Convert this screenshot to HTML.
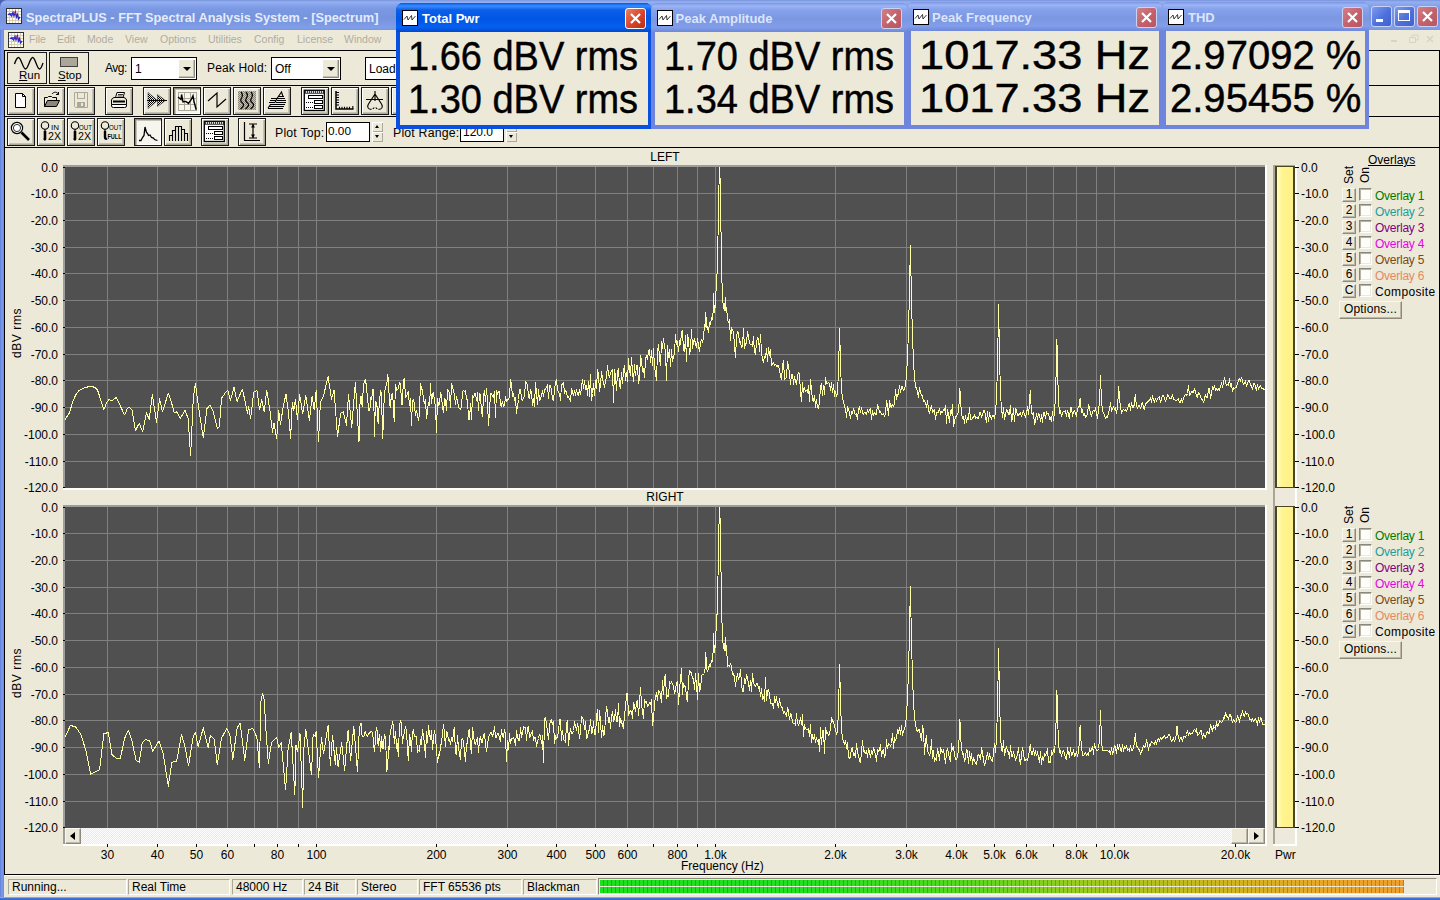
<!DOCTYPE html>
<html><head><meta charset="utf-8"><title>SpectraPLUS - FFT Spectral Analysis System - [Spectrum]</title>
<style>
*{margin:0;padding:0;box-sizing:border-box}
html,body{width:1440px;height:900px;overflow:hidden}
body{position:relative;background:#ece9d8;font-family:"Liberation Sans",sans-serif;font-size:12px;color:#000}
.a{position:absolute}
.t{position:absolute;white-space:nowrap;line-height:1}
.hl{position:absolute;background:#000;height:1px}
.tb{position:absolute;width:28px;height:28px;border:1px solid #1a1a1a;background:#ece9d8;box-shadow:inset 1px 1px 0 #fff,inset -1px -1px 0 #aca899,inset -2px -2px 0 #c5c2b2}
.tb.dn{background:#f6f5ee;box-shadow:inset 1px 1px 0 #8d8a7c,inset 2px 2px 0 #c5c2b2,inset -1px -1px 0 #fff}
.tb svg{position:absolute;left:0;top:0}
.cb{position:absolute;height:23px;border:1px solid #000;background:#fff}
.cb .v{position:absolute;left:3px;top:5px;font-size:12px;line-height:1}
.cb .d{position:absolute;right:1px;top:1px;width:17px;height:19px;background:#ece9d8;box-shadow:inset 1px 1px 0 #fff,inset -1px -1px 0 #8d8a7c,inset -2px -2px 0 #c5c2b2}
.cb .d:after{content:"";position:absolute;left:5px;top:8px;border:4px solid transparent;border-top:4px solid #000;border-bottom:0}
.win{position:absolute;border-radius:7px 7px 0 0;overflow:hidden}
.win .tt{position:absolute;left:0;top:0;right:0;height:29px}
.win .bd{position:absolute;background:#ece9d8}
.win .ti{position:absolute;color:#fff;font-weight:bold;font-size:13px;line-height:1;white-space:nowrap;top:9px}
.win .ic{position:absolute;width:16px;height:16px;background:#fff;border:1px solid #000}
.big{position:absolute;font-size:41px;line-height:1;white-space:nowrap;color:#000;transform-origin:0 0;-webkit-text-stroke:0.45px #000}
.x{position:absolute;width:21px;height:21px;border:1px solid #fff;border-radius:3px}
.yl{position:absolute;font-size:12px;line-height:1;white-space:nowrap;text-align:right;width:50px}
.yr{position:absolute;font-size:12px;line-height:1;white-space:nowrap}
.xl{position:absolute;font-size:12px;line-height:1;white-space:nowrap;transform:translateX(-50%)}
.ov{position:absolute;font-size:12px;line-height:1;white-space:nowrap;letter-spacing:-0.25px}
.sb{position:absolute;width:15px;height:13px;border:1px solid;border-color:#f8f7f0 #8d8a7c #8d8a7c #f8f7f0;background:#ece9d8;font-size:12px;line-height:11px;text-align:center;box-shadow:inset -1px -1px 0 #bab7a8}
.ck{position:absolute;width:13px;height:13px;background:#fdfdfa;border:1px solid;border-color:#8a887c #fff #fff #8a887c;box-shadow:inset 1px 1px 0 #b5b2a4,inset -1px -1px 0 #ece9d8}
.sp{position:absolute;top:879px;height:16px;border:1px solid;border-color:#aca899 #fff #fff #aca899;font-size:12px;line-height:14px;padding-left:3px;white-space:nowrap}
.men{position:absolute;top:33px;font-size:10.5px;line-height:13px;color:#b0ad9f;white-space:nowrap}
</style></head><body>

<div class="a" style="left:0;top:0;width:8px;height:8px;background:#4a62b0"></div>
<div class="a" style="left:0;top:0;width:1440px;height:30px;border-radius:7px 0 0 0;background:linear-gradient(#7a93da 0,#94b0f4 2px,#86a3ec 5px,#7b98e2 9px,#7693de 18px,#7c99e4 24px,#809eea 28px,#7893de 30px)"></div>
<div class="a" style="left:0;top:30px;width:4px;height:870px;background:linear-gradient(90deg,#5f7fd8,#7f9cec 2px,#6d87de 4px)"></div>
<div class="a" style="left:0;top:897px;width:1440px;height:3px;background:linear-gradient(#c8d4f0,#4a78d6 1px,#3f6fd0 2px,#3a66c8)"></div>
<svg class="a" style="left:6px;top:8px" width="16" height="16" viewBox="0 0 16 16"><rect x="0" y="0" width="16" height="16" fill="#303030"/><rect x="1" y="1" width="14" height="14" fill="#fff"/><path d="M1 3.5H15M1 6.5H15M1 9.5H15M1 12.5H15M3.5 1V15M6.5 1V15M9.5 1V15M12.5 1V15" stroke="#dccfa8" stroke-width="1"/><path d="M2 6.5L4 6L5.5 8L7 4.5L8 8L9.5 4L10.5 9L11.5 6.5L12.5 11L14 9" fill="none" stroke="#2828c8" stroke-width="1.3"/><path d="M3 5.5H6M8 3.5L10 6.5" stroke="#c03060" stroke-width="1"/></svg>
<div class="t" style="left:26px;top:10.5px;font-size:13px;font-weight:bold;color:#e4ecfb;transform:scaleX(0.981);transform-origin:0 0" id="title">SpectraPLUS - FFT Spectral Analysis System - [Spectrum]</div>
<div class="x" style="left:1371px;top:6px;background:linear-gradient(135deg,#7d9bf0,#4e70dc 55%,#4062cf);border-color:#c9d4f5"><div style="position:absolute;left:4px;top:12px;width:7px;height:3px;background:#fff"></div></div>
<div class="x" style="left:1394px;top:6px;background:linear-gradient(135deg,#7d9bf0,#4e70dc 55%,#4062cf);border-color:#c9d4f5"><div style="position:absolute;left:3px;top:3px;width:12px;height:11px;border:1px solid #fff;border-top:3px solid #fff"></div></div>
<div class="x" style="left:1417px;top:6px;background:linear-gradient(135deg,#d27f88,#c4606a 55%,#b85560);border-color:#c9d4f5"><svg width="19" height="19" viewBox="0 0 19 19" style="position:absolute;left:0;top:0"><path d="M5 5L14 14M14 5L5 14" stroke="#fff" stroke-width="2.2" stroke-linecap="butt"/></svg></div>
<svg class="a" style="left:8px;top:32px" width="16" height="16" viewBox="0 0 16 16"><rect x="0" y="0" width="16" height="16" fill="#303030"/><rect x="1" y="1" width="14" height="14" fill="#fff"/><path d="M1 3.5H15M1 6.5H15M1 9.5H15M1 12.5H15M3.5 1V15M6.5 1V15M9.5 1V15M12.5 1V15" stroke="#dccfa8" stroke-width="1"/><path d="M2 6.5L4 6L5.5 8L7 4.5L8 8L9.5 4L10.5 9L11.5 6.5L12.5 11L14 9" fill="none" stroke="#2828c8" stroke-width="1.3"/><path d="M3 5.5H6M8 3.5L10 6.5" stroke="#c03060" stroke-width="1"/></svg>
<div class="men" style="left:29px">File</div>
<div class="men" style="left:57px">Edit</div>
<div class="men" style="left:87px">Mode</div>
<div class="men" style="left:125px">View</div>
<div class="men" style="left:160px">Options</div>
<div class="men" style="left:208px">Utilities</div>
<div class="men" style="left:254px">Config</div>
<div class="men" style="left:297px">License</div>
<div class="men" style="left:344px">Window</div>
<svg class="a" style="left:1385px;top:32px" width="52" height="14" viewBox="0 0 52 14"><path d="M6 9H12" stroke="#d8d4c4" stroke-width="2"/><path d="M24.5 5.5H30.5V10.5H24.5Z M27 5V3H33V8H31" fill="none" stroke="#d8d4c4" stroke-width="1"/><path d="M42 4L48 10M48 4L42 10" stroke="#d8d4c4" stroke-width="1.6"/></svg>
<div class="hl" style="left:4px;top:50px;width:1436px;height:1px"></div>
<div class="a" style="left:4px;top:50px;width:1px;height:825px;background:#000"></div>
<div class="hl" style="left:4px;top:85px;width:1436px"></div>
<div class="hl" style="left:4px;top:116px;width:1436px"></div>
<div class="hl" style="left:4px;top:147px;width:1436px"></div>
<div class="hl" style="left:4px;top:874px;width:1436px;height:1px"></div>
<div class="a" style="left:5px;top:875px;width:1435px;height:1px;background:#fff"></div>
<div class="a" style="left:1439px;top:50px;width:1px;height:824px;background:#000"></div>
<div class="a" style="left:7px;top:52px;width:40px;height:32px;border:1px solid #1a1a1a;background:#ece9d8"><svg class="a" style="left:0;top:0" width="38" height="29" viewBox="0 0 38 29"><path d="M6.5 11 C8 6.5,9 4.5,10.5 4.5 C13 4.5,15 16,17.5 16 C20 16,22 4.5,24.7 4.5 C27.2 4.5,29 16,31.5 16 C33 16,34 13,35 10" fill="none" stroke="#000" stroke-width="1.3"/></svg><div class="t" style="left:11px;top:17px;font-size:11.5px"><u>R</u>un</div></div>
<div class="a" style="left:49px;top:52px;width:40px;height:32px;border:1px solid #1a1a1a;background:#ece9d8"><div class="a" style="left:10px;top:4px;width:18px;height:10px;background:#aaa69a;border:1px solid #404040"></div><div class="t" style="left:8px;top:17px;font-size:11.5px"><u>S</u>top</div></div>
<div class="t" style="left:105px;top:62px;font-size:12px;letter-spacing:-0.5px">Avg:</div>
<div class="cb" style="left:131px;top:57px;width:66px"><div class="v">1</div><div class="d"></div></div>
<div class="t" style="left:207px;top:62px;font-size:12px;letter-spacing:0.15px">Peak Hold:</div>
<div class="cb" style="left:271px;top:57px;width:70px"><div class="v">Off</div><div class="d"></div></div>
<div class="cb" style="left:365px;top:57px;width:70px"><div class="v">Load</div></div>
<svg width="0" height="0" style="position:absolute"><defs><pattern id="dp" width="2" height="2" patternUnits="userSpaceOnUse"><rect width="1" height="1" fill="#000"/><rect x="1" y="1" width="1" height="1" fill="#000"/></pattern><pattern id="dg" width="2" height="2" patternUnits="userSpaceOnUse"><rect width="2" height="2" fill="#c8c5b4"/><rect width="1" height="1" fill="#8a877a"/><rect x="1" y="1" width="1" height="1" fill="#8a877a"/></pattern><pattern id="sc" width="2" height="2" patternUnits="userSpaceOnUse"><rect width="2" height="2" fill="#fff"/><rect width="1" height="1" fill="#ece9d8"/><rect x="1" y="1" width="1" height="1" fill="#ece9d8"/></pattern></defs></svg>
<div class="tb" style="left:7px;top:87px"><svg width="26" height="26" viewBox="1 1 26 26"><path d="M8.5 6.5H15.5L18.5 9.5V20.5H8.5Z" fill="#fff" stroke="#000"/><path d="M15.5 6.5V9.5H18.5" fill="none" stroke="#000"/></svg></div>
<div class="tb" style="left:37px;top:87px"><svg width="26" height="26" viewBox="1 1 26 26"><path d="M7.5 19.5V10.5H10.5L11.5 9.5H14.5L15.5 10.5H19.5V13.5" fill="none" stroke="#000"/><path d="M7.5 19.5L10.5 13.5H22.5L19.5 19.5Z" fill="#8a8778" stroke="#000"/><path d="M15 7C17 4.5,20 4.5,21.5 7.5M21.5 7.5V5M21.5 7.5H19" fill="none" stroke="#000"/></svg></div>
<div class="tb" style="left:67px;top:87px"><svg width="26" height="26" viewBox="1 1 26 26"><path d="M7.5 5.5H20.5V20.5H8.5L7.5 19.5Z" fill="none" stroke="#aca899"/><rect x="10.5" y="5.5" width="7" height="6" fill="none" stroke="#aca899"/><rect x="10" y="15" width="8" height="5" fill="#aca899"/><rect x="14" y="16" width="2" height="3" fill="#ece9d8"/></svg></div>
<div class="tb" style="left:105px;top:87px"><svg width="26" height="26" viewBox="1 1 26 26"><path d="M10.5 10.5L12 5.5H19.5L18 10.5Z" fill="#fff" stroke="#000"/><path d="M13 7.5H18M12.5 9H17.5" stroke="#000" stroke-width="0.8"/><path d="M6.5 13Q6.5 11.5 9 10.5H19Q21.5 11.5 21.5 13V17.5H6.5Z" fill="#ece9d8" stroke="#000"/><path d="M6.5 17.5H21.5V19Q21.5 20.5 19.5 20.5H8.5Q6.5 20.5 6.5 19Z" fill="#fff" stroke="#000"/><path d="M8 14.5H20" stroke="#000" stroke-width="2"/></svg></div>
<div class="tb" style="left:143px;top:87px"><svg width="26" height="26" viewBox="1 1 26 26"><path d="M5 5.5L14.5 13.5L5 21.5Z M14.5 7.5L22.5 13.5L14.5 19.5Z" fill="url(#dp)" stroke="#000" stroke-width="0.4"/><path d="M4 13.5H24" stroke="#000" shape-rendering="crispEdges"/></svg></div>
<div class="tb dn" style="left:173px;top:87px"><svg width="26" height="26" viewBox="1 1 26 26"><path d="M5.5 5.5H23.5V23.5H5.5ZM5.5 11.5H23.5M5.5 17.5H23.5M11.5 5.5V23.5M17.5 5.5V23.5" fill="none" stroke="#aca899" shape-rendering="crispEdges"/><path d="M5 10L8 12.5L8.6 7.5L10 15L12.8 14.4L15.5 16.4L18.3 12.3L20 8.8L21.1 15L23.2 22.7" fill="none" stroke="#000" stroke-width="1.4"/></svg></div>
<div class="tb" style="left:203px;top:87px"><svg width="26" height="26" viewBox="1 1 26 26"><path d="M5 14L14 6V20L23 12" fill="none" stroke="#000" stroke-width="1.2"/></svg></div>
<div class="tb" style="left:233px;top:87px"><svg width="26" height="26" viewBox="1 1 26 26"><rect x="5" y="4" width="18" height="19" fill="url(#dg)"/><path d="M8 5Q10.5 8 8.5 11T9.5 16T7.5 22M13 5Q15.5 8 13.5 11T14.5 16T12.5 22M18 5Q20.5 8 18.5 11T19.5 16T17.5 22" fill="none" stroke="#000" stroke-width="1.25"/></svg></div>
<div class="tb" style="left:263px;top:87px"><svg width="26" height="26" viewBox="1 1 26 26"><path d="M8 11.5H14M7 13.5H13M6 15.5H12M7 17.5H22M6 19.5H21M5 21.5H20M15 9.5H21M14 11.5H22M14 13.5H23M13 15.5H23" stroke="#000" stroke-width="1" shape-rendering="crispEdges"/><path d="M14 11.5L18.5 5L20 9.5M12 15.5L14 11.5M5 21L7.5 17.5" fill="none" stroke="#000" stroke-width="1.1"/></svg></div>
<div class="tb" style="left:301px;top:87px"><svg width="26" height="26" viewBox="1 1 26 26"><rect x="3.3" y="3.3" width="20" height="20.2" fill="#fff" stroke="#000" stroke-width="1.3"/><path d="M4 4.9H23" stroke="#000" stroke-width="1.5" stroke-dasharray="1.2 0.8"/><path d="M4 6.4H23" stroke="#000" stroke-width="0.7"/><g shape-rendering="crispEdges" fill="#fff" stroke="#000"><rect x="7.5" y="8.5" width="14" height="3"/><rect x="13.5" y="13.5" width="8" height="3"/><rect x="13.5" y="18.5" width="8" height="3"/><path d="M5 15.5H12M5 20.5H12" stroke-dasharray="1 1"/></g></svg></div>
<div class="tb" style="left:331px;top:87px"><svg width="26" height="26" viewBox="1 1 26 26"><path d="M5 4V22H22.5" fill="none" stroke="#000" stroke-width="1.5"/><path d="M5 5.5H8M5 8H8M5 10.5H8M5 13H8M5 15.5H8M5 18H8M8.5 22V19.8M11 22V19.8M13.5 22V19.8M16 22V19.8M18.5 22V19.8M21.8 22V19" stroke="#000" stroke-width="1.1"/></svg></div>
<div class="tb" style="left:361px;top:87px"><svg width="26" height="26" viewBox="1 1 26 26"><path d="M14 4V14M5 12.5H22M14 7L7.5 17Q5.5 20.5 8.5 22M14 7L20.5 17Q22.5 20.5 19.5 22" fill="none" stroke="#000" stroke-width="1.15"/><path d="M8.5 22.3Q12 22.5 13.2 20.5M19.5 22.3Q16 22.5 14.8 20.5" fill="none" stroke="#000" stroke-width="1.1" stroke-dasharray="2 1.2"/></svg></div>
<div class="tb" style="left:391px;top:87px"><svg width="26" height="26" viewBox="1 1 26 26"><path d="M8.5 6.5H15.5L18.5 9.5V20.5H8.5Z" fill="#fff" stroke="#000"/><path d="M15.5 6.5V9.5H18.5" fill="none" stroke="#000"/></svg></div>
<div class="tb" style="left:7px;top:118px"><svg width="26" height="26" viewBox="1 1 26 26"><circle cx="10" cy="10" r="5.6" fill="#fff" stroke="#000" stroke-width="1.2"/><circle cx="10" cy="10" r="3.6" fill="none" stroke="#000" stroke-width="0.8"/><path d="M14.5 14.5L22 22" stroke="#000" stroke-width="2.6"/></svg></div>
<div class="tb" style="left:37px;top:118px"><svg width="26" height="26" viewBox="1 1 26 26"><circle cx="8" cy="7.5" r="3.7" fill="none" stroke="#000" stroke-width="1.1"/><path d="M8 11V13" stroke="#000" stroke-width="1.2"/><path d="M8 13V21L7 22" fill="none" stroke="#000" stroke-width="2.6"/><text x="14" y="11.5" font-size="8" font-family='"Liberation Sans", sans-serif' textLength="8" lengthAdjust="spacingAndGlyphs">IN</text><text x="11" y="22" font-size="11.5" font-family='"Liberation Sans", sans-serif' textLength="13" lengthAdjust="spacingAndGlyphs">2X</text></svg></div>
<div class="tb" style="left:67px;top:118px"><svg width="26" height="26" viewBox="1 1 26 26"><circle cx="8" cy="7.5" r="3.7" fill="none" stroke="#000" stroke-width="1.1"/><path d="M8 11V13" stroke="#000" stroke-width="1.2"/><path d="M8 13V21L7 22" fill="none" stroke="#000" stroke-width="2.6"/><text x="12" y="11.5" font-size="8" font-family='"Liberation Sans", sans-serif' textLength="13" lengthAdjust="spacingAndGlyphs">OUT</text><text x="11" y="22" font-size="11.5" font-family='"Liberation Sans", sans-serif' textLength="13" lengthAdjust="spacingAndGlyphs">2X</text></svg></div>
<div class="tb" style="left:97px;top:118px"><svg width="26" height="26" viewBox="1 1 26 26"><circle cx="8" cy="7.5" r="3.7" fill="none" stroke="#000" stroke-width="1.1"/><path d="M8 11V13" stroke="#000" stroke-width="1.2"/><path d="M8 13V19Q8 21.5 10 20.5" fill="none" stroke="#000" stroke-width="2.4"/><text x="12" y="11.5" font-size="8" font-family='"Liberation Sans", sans-serif' textLength="13" lengthAdjust="spacingAndGlyphs">OUT</text><text x="10.5" y="20.5" font-size="7.5" font-weight="bold" font-family='"Liberation Sans", sans-serif' textLength="14" lengthAdjust="spacingAndGlyphs">FULL</text></svg></div>
<div class="tb dn" style="left:134px;top:118px"><svg width="26" height="26" viewBox="1 1 26 26"><path d="M5 22.5H7L8.5 19.5L10 17.5L11 9L12.5 14.5L13.5 15.5L14.5 17.5L16 17L17.5 19.5L19.5 20L20.5 21.5L23.5 22.5" fill="none" stroke="#000" stroke-width="1.3"/></svg></div>
<div class="tb" style="left:164px;top:118px"><svg width="26" height="26" viewBox="1 1 26 26"><path d="M5.5 23V17.5H8.5V23M8.5 17V12.5H11.5V23M11.5 12V8.5H14.5V23M14.5 8.5H17.5V23M17.5 11.5H20.5V23M20.5 15.5H23.5V23" fill="none" stroke="#000" stroke-width="1.1"/></svg></div>
<div class="tb" style="left:201px;top:118px"><svg width="26" height="26" viewBox="1 1 26 26"><rect x="3.3" y="3.3" width="20" height="20.2" fill="#fff" stroke="#000" stroke-width="1.3"/><path d="M4 4.9H23" stroke="#000" stroke-width="1.5" stroke-dasharray="1.2 0.8"/><path d="M4 6.4H23" stroke="#000" stroke-width="0.7"/><g shape-rendering="crispEdges" fill="#fff" stroke="#000"><rect x="7.5" y="8.5" width="14" height="3"/><rect x="13.5" y="13.5" width="8" height="3"/><rect x="13.5" y="18.5" width="8" height="3"/><path d="M5 15.5H12M5 20.5H12" stroke-dasharray="1 1"/></g></svg></div>
<div class="tb" style="left:238px;top:118px"><svg width="26" height="26" viewBox="1 1 26 26"><path d="M6.5 4V22.5H22" fill="none" stroke="#000" stroke-width="1.2"/><path d="M11 6H19M11 20H19M15 6V20" stroke="#000" stroke-width="1.2"/><path d="M15 6L13 9.5H17ZM15 20L13 16.5H17Z" fill="#000"/></svg></div>
<div class="t" style="left:275px;top:127px;font-size:12.3px;letter-spacing:0.2px">Plot Top:</div>
<div class="cb" style="left:326px;top:122px;width:44px;height:20px"><div class="v" style="left:1px;top:3px;font-size:11.8px">0.00</div></div>
<div class="a" style="left:372px;top:122px;width:11px;height:10px;background:#ece9d8;box-shadow:inset 1px 1px 0 #fff,inset -1px -1px 0 #aca899"><div class="a" style="left:3px;top:3px;border:2.5px solid transparent;border-bottom:3px solid #000;border-top:0"></div></div>
<div class="a" style="left:372px;top:132px;width:11px;height:10px;background:#ece9d8;box-shadow:inset 1px 1px 0 #fff,inset -1px -1px 0 #aca899"><div class="a" style="left:3px;top:3px;border:2.5px solid transparent;border-top:3px solid #000;border-bottom:0"></div></div>
<div class="t" style="left:393px;top:127px;font-size:12.3px;letter-spacing:0.2px">Plot Range:</div>
<div class="cb" style="left:460px;top:122px;width:44px;height:20px"><div class="v" style="left:2px;top:3px;font-size:12px">120.0</div></div>
<div class="a" style="left:506px;top:122px;width:11px;height:10px;background:#ece9d8;box-shadow:inset 1px 1px 0 #fff,inset -1px -1px 0 #aca899"></div>
<div class="a" style="left:506px;top:132px;width:11px;height:10px;background:#ece9d8;box-shadow:inset 1px 1px 0 #fff,inset -1px -1px 0 #aca899"><div class="a" style="left:3px;top:3px;border:2.5px solid transparent;border-top:3px solid #000;border-bottom:0"></div></div>
<div class="win" style="left:396px;top:3px;width:256px;height:126px;background:#0a50e0"><div class="tt" style="background:linear-gradient(#0058ee 0,#3a8cff 3px,#0c5fe8 7px,#0055e5 16px,#0560f0 24px,#0048d0 29px)"></div><div class="ic" style="left:6px;top:7px"><svg width="14" height="14" viewBox="0 0 14 14" style="position:absolute;left:0;top:0"><path d="M1 8.5L4 5L5 9L8.5 4.5L9 9L12.5 5" fill="none" stroke="#222" stroke-width="0.9"/></svg></div><div class="ti" style="left:26.0px;color:#fff">Total Pwr</div><div class="x" style="left:229px;top:5px;background:linear-gradient(135deg,#e9805f,#d9432a 55%,#b92e12);border-color:#fff"><svg width="19" height="19" viewBox="0 0 19 19" style="position:absolute;left:0;top:0"><path d="M5 5L14 14M14 5L5 14" stroke="#fff" stroke-width="2.2" stroke-linecap="butt"/></svg></div><div class="bd" style="left:4px;top:29px;width:248px;height:93px"><div class="big" style="left:8.0px;top:3.8px;transform:scaleX(0.926)">1.66 dBV rms</div><div class="big" style="left:8.0px;top:46.7px;transform:scaleX(0.926)">1.30 dBV rms</div></div></div>
<div class="win" style="left:651px;top:3px;width:257px;height:126px;background:#6f84dc"><div class="tt" style="background:linear-gradient(#7a96e4 0,#9db5f5 3px,#86a2ec 7px,#7b97e2 16px,#829eea 24px,#6f88da 29px)"></div><div class="ic" style="left:6px;top:7px"><svg width="14" height="14" viewBox="0 0 14 14" style="position:absolute;left:0;top:0"><path d="M1 8.5L4 5L5 9L8.5 4.5L9 9L12.5 5" fill="none" stroke="#222" stroke-width="0.9"/></svg></div><div class="ti" style="left:24.5px;color:#dbe5fb">Peak Amplitude</div><div class="x" style="left:230px;top:5px;background:linear-gradient(135deg,#d27f88,#c4606a 55%,#b85560);border-color:#c9d4f5"><svg width="19" height="19" viewBox="0 0 19 19" style="position:absolute;left:0;top:0"><path d="M5 5L14 14M14 5L5 14" stroke="#fff" stroke-width="2.2" stroke-linecap="butt"/></svg></div><div class="bd" style="left:4px;top:29px;width:249px;height:93px"><div class="big" style="left:8.5px;top:3.8px;transform:scaleX(0.926)">1.70 dBV rms</div><div class="big" style="left:8.5px;top:46.7px;transform:scaleX(0.926)">1.34 dBV rms</div></div></div>
<div class="win" style="left:907px;top:2px;width:256px;height:127px;background:#6f84dc"><div class="tt" style="background:linear-gradient(#7a96e4 0,#9db5f5 3px,#86a2ec 7px,#7b97e2 16px,#829eea 24px,#6f88da 29px)"></div><div class="ic" style="left:6px;top:7px"><svg width="14" height="14" viewBox="0 0 14 14" style="position:absolute;left:0;top:0"><path d="M1 8.5L4 5L5 9L8.5 4.5L9 9L12.5 5" fill="none" stroke="#222" stroke-width="0.9"/></svg></div><div class="ti" style="left:25.0px;color:#dbe5fb">Peak Frequency</div><div class="x" style="left:229px;top:5px;background:linear-gradient(135deg,#d27f88,#c4606a 55%,#b85560);border-color:#c9d4f5"><svg width="19" height="19" viewBox="0 0 19 19" style="position:absolute;left:0;top:0"><path d="M5 5L14 14M14 5L5 14" stroke="#fff" stroke-width="2.2" stroke-linecap="butt"/></svg></div><div class="bd" style="left:4px;top:29px;width:248px;height:94px"><div class="big" style="left:8.0px;top:3.8px;transform:scaleX(1.102)">1017.33 Hz</div><div class="big" style="left:8.0px;top:46.7px;transform:scaleX(1.102)">1017.33 Hz</div></div></div>
<div class="win" style="left:1162px;top:2px;width:207px;height:127px;background:#6f84dc"><div class="tt" style="background:linear-gradient(#7a96e4 0,#9db5f5 3px,#86a2ec 7px,#7b97e2 16px,#829eea 24px,#6f88da 29px)"></div><div class="ic" style="left:6px;top:7px"><svg width="14" height="14" viewBox="0 0 14 14" style="position:absolute;left:0;top:0"><path d="M1 8.5L4 5L5 9L8.5 4.5L9 9L12.5 5" fill="none" stroke="#222" stroke-width="0.9"/></svg></div><div class="ti" style="left:26.0px;color:#dbe5fb">THD</div><div class="x" style="left:180px;top:5px;background:linear-gradient(135deg,#d27f88,#c4606a 55%,#b85560);border-color:#c9d4f5"><svg width="19" height="19" viewBox="0 0 19 19" style="position:absolute;left:0;top:0"><path d="M5 5L14 14M14 5L5 14" stroke="#fff" stroke-width="2.2" stroke-linecap="butt"/></svg></div><div class="bd" style="left:4px;top:29px;width:199px;height:94px"><div class="big" style="left:4.0px;top:3.8px;transform:scaleX(0.976)">2.97092 %</div><div class="big" style="left:4.0px;top:46.7px;transform:scaleX(0.976)">2.95455 %</div></div></div>
<div class="t" style="left:1368px;top:154px;font-size:12px;text-decoration:underline">Overlays</div>
<div class="t" style="left:665px;top:151px;font-size:12px;transform:translateX(-50%)">LEFT</div><div class="a" style="left:63px;top:165px;width:1204px;height:325px;background:#fff"></div><div class="a" style="left:63px;top:165px;width:1202px;height:323px;background:#9d9d9d"></div><svg class="a" style="left:65px;top:167px" width="1200" height="321" viewBox="65 167 1200 321"><rect x="65" y="167" width="1200" height="321" fill="#505050"/><path d="M65 193.5H1265M65 220.5H1265M65 247.5H1265M65 273.5H1265M65 300.5H1265M65 327.5H1265M65 354.5H1265M65 380.5H1265M65 407.5H1265M65 434.5H1265M65 461.5H1265M107.5 167V488M157.5 167V488M196.5 167V488M227.5 167V488M254.5 167V488M277.5 167V488M298.5 167V488M316.5 167V488M436.5 167V488M507.5 167V488M556.5 167V488M595.5 167V488M627.5 167V488M653.5 167V488M677.5 167V488M697.5 167V488M715.5 167V488M835.5 167V488M906.5 167V488M956.5 167V488M994.5 167V488M1026.5 167V488M1053.5 167V488M1076.5 167V488M1096.5 167V488M1114.5 167V488M1235.5 167V488" stroke="#808080" stroke-width="1" fill="none" shape-rendering="crispEdges"/><polyline points="64.6,420.2 69.4,412.9 72.5,402.5 75.6,395.2 79.2,390.4 82.9,388.3 87.1,387.1 91.2,386.2 95.0,387.5 97.5,390.0 100.6,399.4 103.8,409.8 106.2,403.5 109.0,399.4 112.1,401.0 116.2,397.3 120.4,406.2 124.6,415.0 127.1,409.2 128.8,407.1 131.9,409.8 135.4,430.6 139.2,423.3 142.7,431.7 146.5,412.9 149.2,419.2 152.3,394.6 156.5,422.3 159.6,398.8 162.5,411.9 168.3,393.1 171.5,402.5 174.2,412.9 176.7,411.9 180.4,418.1 185.0,410.4 188.1,418.1 190.6,455.6 193.3,398.3 195.4,383.8 198.5,406.7 203.3,437.9 206.9,408.8 210.0,405.0 213.1,410.8 217.3,428.5 219.4,426.5 221.5,398.3 224.6,393.8 227.7,390.0 230.4,400.4 234.0,387.5 237.1,401.5 242.3,389.0 245.4,402.5 247.5,414.0 248.5,406.7 250.6,418.1 253.8,392.1 256.9,390.4 259.6,409.8 261.7,399.4 264.2,411.9 266.7,390.0 270.0,410.8 272.5,432.7 274.0,423.3 276.7,438.3 278.8,410.8 280.4,424.4 283.3,406.7 286.0,393.8 288.5,412.9 290.6,438.3 292.3,402.5 293.8,410.8 295.4,399.4 297.5,419.2 299.6,394.2 302.7,414.0 305.8,395.8 309.4,420.2 312.1,396.2 314.2,409.8 316.2,390.0 318.5,441.7 320.4,402.5 323.5,395.8 328.1,376.5 331.5,399.4 334.0,390.0 337.5,436.2 340.8,412.9 343.3,411.9 346.5,425.4 348.5,394.2 351.7,427.5 355.4,382.7 359.0,442.1 360.2,397.5 361.2,395.9 362.2,406.8 363.2,390.2 364.2,381.7 365.1,379.7 366.1,383.8 367.5,397.8 368.9,411.0 369.9,410.0 370.8,397.7 371.7,399.6 372.7,389.3 373.6,390.2 374.5,436.3 375.4,401.7 376.3,403.1 377.2,407.4 378.1,423.7 379.5,399.1 380.8,390.5 381.7,399.1 382.5,438.6 383.4,423.1 384.3,393.4 385.5,387.1 386.8,384.2 387.7,374.4 388.5,381.8 389.4,400.9 390.2,407.2 391.5,394.9 392.7,393.8 393.5,410.1 394.3,421.9 395.5,384.3 396.7,390.4 397.5,389.4 398.3,388.4 399.5,382.8 400.7,384.8 401.5,404.0 402.3,404.4 403.5,379.1 404.6,378.9 405.4,397.8 406.5,396.6 407.6,393.5 408.4,391.5 409.5,406.0 410.6,398.3 411.4,425.5 412.5,400.8 413.6,399.3 414.3,403.8 415.5,415.7 416.5,410.8 417.5,415.4 418.6,420.5 419.3,414.4 420.5,383.2 421.4,388.1 422.5,390.6 423.5,399.6 424.5,403.9 425.5,399.1 426.5,418.5 427.6,410.0 428.5,402.1 429.6,405.7 430.5,383.8 431.5,403.7 432.5,394.5 433.5,392.4 434.5,402.1 435.4,405.4 436.5,432.6 437.5,398.6 438.6,405.4 439.5,404.0 440.5,392.6 441.5,395.7 442.5,407.8 443.6,412.2 444.5,399.0 445.4,399.4 446.5,410.7 447.5,389.7 448.4,390.3 449.5,393.8 450.5,407.1 451.5,383.7 452.6,386.4 453.5,392.6 454.5,394.0 455.4,404.3 456.5,396.3 457.5,400.8 458.5,406.8 459.5,408.9 460.5,409.4 461.5,406.7 462.5,391.9 463.5,390.3 464.5,391.3 465.5,390.5 466.5,399.7 467.5,399.5 468.5,419.2 469.5,419.2 470.5,403.9 471.5,420.0 472.5,395.1 473.5,397.8 474.5,393.5 475.5,393.3 476.5,400.9 477.5,393.0 478.5,410.3 479.5,393.1 480.5,395.6 481.5,411.6 482.5,416.6 483.5,395.5 484.5,390.9 485.5,401.4 486.5,388.2 487.5,401.2 488.5,426.0 489.5,410.4 490.5,394.0 491.5,393.9 492.5,396.3 493.5,397.2 494.5,391.4 495.5,417.3 496.5,390.3 497.5,394.4 498.5,391.8 499.5,392.0 500.5,405.2 501.5,406.1 502.5,401.1 503.5,406.1 504.5,405.9 505.5,396.7 506.5,401.8 507.5,399.2 508.5,399.6 509.5,396.6 510.5,379.6 511.5,384.9 512.5,396.4 513.5,393.4 514.5,401.0 515.5,397.5 516.5,413.1 517.5,405.8 518.5,399.5 519.5,389.8 520.5,389.5 521.5,398.5 522.5,400.9 523.5,397.1 524.5,396.6 525.5,381.8 526.5,383.4 527.5,384.6 528.5,396.7 529.5,398.9 530.5,389.9 531.5,391.5 532.5,405.9 533.5,398.2 534.5,406.8 535.5,382.3 536.5,392.5 537.5,404.7 538.5,389.2 539.5,400.9 540.5,398.7 541.5,396.2 542.5,390.7 543.5,396.2 544.5,389.4 545.5,389.3 546.5,387.4 547.5,384.5 548.5,398.6 549.5,385.1 550.5,385.6 551.5,390.7 552.5,399.6 553.5,400.3 554.5,389.2 555.5,382.4 556.5,379.8 557.5,389.6 558.5,392.5 559.5,393.2 560.5,400.3 561.5,385.2 562.5,384.2 563.5,382.5 564.5,393.4 565.5,390.1 566.5,392.2 567.5,397.1 568.5,396.7 569.5,399.2 570.5,401.3 571.5,388.5 572.5,391.2 573.5,396.0 574.5,390.2 575.5,395.2 576.5,389.7 577.5,394.3 578.5,395.4 579.5,389.8 580.5,394.3 581.5,387.1 582.5,379.5 583.5,388.7 584.5,381.0 585.5,389.8 586.5,385.1 587.5,395.4 588.5,381.4 589.5,396.1 590.5,374.6 591.5,400.2 592.5,393.5 593.5,383.5 594.5,395.6 595.5,380.7 596.5,388.8 597.5,369.6 598.5,373.6 599.5,391.9 600.5,384.5 601.5,371.6 602.5,379.0 603.5,383.3 604.5,387.4 605.5,381.0 606.5,377.3 607.5,365.7 608.5,374.7 609.5,378.0 610.5,372.9 611.5,371.1 612.5,369.7 613.5,402.1 614.5,369.4 615.5,377.3 616.5,390.7 617.5,371.7 618.5,368.8 619.5,385.4 620.5,388.7 621.5,372.5 622.5,383.5 623.5,370.8 624.5,366.0 625.5,380.2 626.5,372.6 627.5,381.5 628.5,358.9 629.5,370.3 630.5,375.6 631.5,357.6 632.5,371.9 633.5,381.9 634.5,365.0 635.5,375.8 636.5,365.6 637.5,365.6 638.5,383.3 639.5,378.8 640.5,355.8 641.5,360.7 642.5,371.4 643.5,368.6 644.5,377.7 645.5,358.5 646.5,355.8 647.5,359.3 648.5,350.9 649.5,349.7 650.5,362.3 651.5,350.2 652.5,365.7 653.5,348.7 654.5,367.1 655.5,372.4 656.5,380.5 657.5,351.9 658.5,344.1 659.5,357.2 660.5,366.0 661.5,341.7 662.5,348.5 663.5,338.3 664.5,347.4 665.5,350.6 666.5,380.7 667.5,345.7 668.5,357.9 669.5,349.2 670.5,366.2 671.5,349.8 672.5,361.9 673.5,356.8 674.5,352.7 675.5,334.7 676.5,344.4 677.5,342.0 678.5,351.2 679.5,340.8 680.5,344.3 681.5,331.8 682.5,330.3 683.5,350.6 684.5,351.5 685.5,335.9 686.5,361.2 687.5,334.1 688.5,339.9 689.5,354.6 690.5,348.8 691.5,329.6 692.5,348.1 693.5,341.4 694.5,339.0 695.5,343.8 696.5,348.0 697.5,338.4 698.5,345.8 699.5,351.6 700.5,341.9 701.5,339.6 702.5,342.7 703.5,337.6 704.5,324.6 705.2,327.0 705.8,312.0 706.5,328.0 707.5,326.4 708.5,332.4 709.5,322.1 710.5,325.0 711.5,317.5 712.5,319.1 712.9,317.0 713.6,293.0 714.3,313.0 715.0,308.0 716.0,291.0 716.9,278.0 717.7,253.0 718.5,209.0 719.4,166.0 720.6,190.0 721.0,232.0 721.7,274.0 722.7,301.0 723.8,308.0 724.6,311.0 725.3,297.0 726.1,313.0 726.5,307.3 727.5,318.8 728.5,322.3 729.5,319.8 730.5,340.1 731.5,327.6 732.5,330.2 733.5,331.3 734.5,346.2 735.5,357.3 736.5,337.2 737.5,331.8 738.5,332.7 739.5,342.8 740.5,341.9 741.5,347.6 742.5,346.4 743.5,328.9 744.5,348.3 745.5,343.4 746.5,343.4 747.5,331.1 748.5,336.0 749.5,343.1 750.5,344.7 751.5,344.2 752.5,346.2 753.5,336.5 754.5,352.5 755.5,354.1 756.5,342.6 757.5,338.0 758.5,338.5 759.5,352.0 760.5,334.6 761.5,351.7 762.5,360.2 763.5,362.2 764.5,356.7 765.5,357.8 766.5,348.9 767.5,361.2 768.5,347.6 769.5,355.1 770.5,349.8 771.5,365.9 772.5,363.6 773.5,362.7 774.5,365.5 775.5,364.2 776.5,366.5 777.5,366.0 778.5,365.7 779.5,369.3 780.5,376.1 781.5,379.9 782.5,366.6 783.5,360.4 784.5,379.1 785.5,378.9 786.5,376.6 787.5,361.8 788.5,365.6 789.5,374.4 790.5,384.1 791.5,375.0 792.5,374.1 793.5,384.1 794.5,376.8 795.5,381.6 796.5,384.1 797.5,375.2 798.5,372.4 799.5,374.1 800.5,393.3 801.5,401.5 802.5,382.6 803.5,392.9 804.5,387.9 805.5,391.8 806.5,390.3 807.5,392.2 808.5,385.4 809.5,401.9 810.5,380.0 811.5,390.3 812.5,400.2 813.5,401.4 814.5,395.5 815.5,407.1 816.5,399.4 817.5,407.8 818.5,408.4 819.5,402.2 820.5,386.1 821.5,383.8 822.5,396.0 823.5,385.2 824.5,394.4 825.5,377.2 826.5,383.7 827.5,383.5 828.5,382.1 829.5,384.2 830.5,390.1 831.5,382.9 832.5,393.0 833.5,384.2 834.5,396.1 835.5,391.1 836.5,397.0 837.5,392.4 838.5,371.0 839.5,332.8 839.6,328.0 840.5,364.8 841.5,389.4 842.5,398.8 843.5,400.6 844.5,407.3 845.5,408.4 846.5,417.6 847.5,406.3 848.5,408.8 849.5,412.2 850.5,418.8 851.5,411.8 852.5,413.6 853.5,408.5 854.5,412.5 855.5,414.8 856.5,413.5 857.5,419.5 858.5,408.8 859.5,407.0 860.5,412.7 861.5,407.3 862.5,412.8 863.5,414.2 864.5,412.4 865.5,412.9 866.5,414.8 867.5,409.3 868.5,412.2 869.5,409.2 870.5,408.8 871.5,419.3 872.5,411.0 873.5,415.4 874.5,412.5 875.5,414.1 876.5,414.2 877.5,404.1 878.5,407.2 879.5,412.7 880.5,411.3 881.5,414.1 882.5,414.4 883.5,414.0 884.5,416.3 885.5,413.8 886.5,401.0 887.5,405.1 888.5,415.9 889.5,400.3 890.5,405.7 891.5,407.1 892.5,404.1 893.5,406.0 894.5,403.5 895.5,389.1 896.5,399.4 897.5,395.1 898.5,393.7 899.5,385.2 900.5,392.7 901.5,387.0 902.5,386.9 903.5,390.9 904.5,389.6 905.5,384.9 906.5,374.9 907.5,357.3 908.5,330.2 909.5,291.5 910.4,245.0 910.5,250.8 911.5,300.3 912.5,336.5 913.5,361.5 914.5,377.4 915.5,386.2 916.5,388.8 917.5,391.0 918.5,397.9 919.5,387.1 920.5,393.3 921.5,394.9 922.5,395.8 923.5,401.8 924.5,401.0 925.5,402.8 926.5,407.8 927.5,400.7 928.5,409.6 929.5,413.2 930.5,408.7 931.5,405.9 932.5,412.3 933.5,411.3 934.5,409.6 935.5,419.8 936.5,412.1 937.5,412.6 938.5,412.4 939.5,408.4 940.5,414.2 941.5,411.9 942.5,412.8 943.5,409.6 944.5,410.4 945.5,405.3 946.5,423.6 947.5,410.0 948.5,414.4 949.5,422.8 950.5,410.5 951.5,413.2 952.5,404.6 953.5,426.7 954.5,421.5 955.5,416.2 956.5,416.0 957.5,414.3 958.5,411.5 959.5,397.0 959.9,388.0 960.5,400.8 961.5,413.2 962.5,418.6 963.5,416.8 964.5,423.2 965.5,415.2 966.5,422.1 967.5,417.4 968.5,419.4 969.5,407.7 970.5,419.8 971.5,419.3 972.5,418.2 973.5,417.0 974.5,414.8 975.5,418.1 976.5,417.1 977.5,418.2 978.5,418.9 979.5,412.6 980.5,412.6 981.5,417.7 982.5,414.3 983.5,411.0 984.5,410.6 985.5,415.8 986.5,423.0 987.5,412.0 988.5,421.5 989.5,413.0 990.5,417.2 991.5,419.5 992.5,415.4 993.5,415.4 994.5,418.6 995.5,412.1 996.5,398.6 997.5,365.8 998.5,311.4 998.6,304.7 999.5,356.7 1000.5,393.7 1001.5,408.7 1002.5,417.2 1003.5,407.8 1004.5,419.9 1005.5,414.7 1006.5,409.8 1007.5,410.4 1008.5,414.6 1009.5,414.0 1010.5,405.2 1011.5,421.8 1012.5,417.2 1013.5,408.2 1014.5,421.2 1015.5,408.6 1016.5,410.4 1017.5,416.0 1018.5,414.7 1019.5,414.1 1020.5,412.9 1021.5,416.2 1022.5,413.9 1023.5,410.6 1024.5,415.0 1025.5,417.1 1026.5,412.7 1027.5,406.7 1028.5,414.5 1029.5,404.5 1030.2,390.0 1030.5,397.0 1031.5,411.9 1032.5,414.9 1033.5,412.4 1034.5,424.6 1035.5,421.0 1036.5,413.2 1037.5,419.6 1038.5,413.2 1039.5,414.5 1040.5,421.4 1041.5,414.7 1042.5,422.2 1043.5,412.9 1044.5,412.7 1045.5,418.3 1046.5,411.8 1047.5,413.9 1048.5,413.5 1049.5,419.2 1050.5,417.6 1051.5,421.5 1052.5,411.7 1053.5,420.2 1054.5,412.7 1055.5,395.9 1056.5,359.5 1056.9,339.0 1057.5,368.4 1058.5,400.7 1059.5,413.7 1060.5,411.0 1061.5,416.2 1062.5,413.4 1063.5,411.4 1064.5,412.0 1065.5,411.0 1066.5,417.0 1067.5,410.1 1068.5,414.7 1069.5,418.1 1070.5,407.8 1071.5,407.8 1072.5,416.5 1073.5,411.2 1074.5,410.5 1075.5,413.3 1076.5,416.7 1077.5,408.5 1078.5,407.1 1079.5,406.4 1080.1,397.8 1080.5,403.9 1081.5,412.5 1082.5,409.2 1083.5,415.9 1084.5,413.3 1085.5,417.6 1086.5,416.4 1087.5,412.8 1088.5,405.0 1089.5,406.9 1090.5,414.1 1091.5,416.2 1092.5,412.2 1093.5,410.2 1094.5,411.8 1095.5,407.7 1096.5,414.2 1097.5,418.2 1098.5,410.7 1099.5,401.7 1100.5,376.0 1100.5,376.0 1101.5,401.7 1102.5,410.7 1103.5,412.7 1104.5,415.2 1105.5,418.4 1106.5,416.5 1107.5,417.2 1108.5,412.8 1109.5,409.9 1110.5,402.9 1111.5,411.3 1112.5,409.3 1113.5,406.6 1114.5,409.0 1115.5,407.4 1116.5,414.0 1117.5,406.2 1118.5,392.9 1118.8,386.7 1119.5,399.6 1120.5,406.2 1121.5,413.1 1122.5,410.8 1123.5,409.2 1124.5,410.8 1125.5,409.6 1126.5,411.2 1127.5,408.3 1128.5,405.0 1129.5,403.7 1130.5,410.6 1131.5,402.4 1132.5,406.8 1133.5,407.9 1134.5,403.4 1135.3,394.0 1135.5,396.9 1136.5,406.1 1137.5,408.1 1138.5,405.7 1139.5,405.4 1140.5,408.8 1141.5,405.0 1142.5,402.2 1143.5,408.4 1144.5,409.9 1145.5,403.1 1146.5,403.2 1147.5,402.2 1148.5,400.8 1149.5,400.4 1150.5,397.3 1151.5,402.7 1152.5,395.8 1153.5,399.8 1154.5,402.0 1155.5,398.1 1156.5,401.3 1157.5,398.9 1158.5,397.2 1159.5,396.3 1160.5,402.7 1161.5,399.0 1162.5,395.2 1163.5,395.4 1164.5,398.1 1165.5,401.5 1166.5,399.1 1167.5,394.4 1168.5,395.7 1169.5,398.9 1170.5,398.1 1171.5,398.5 1172.5,394.3 1173.5,399.2 1174.5,399.7 1175.5,400.9 1176.5,400.3 1177.5,399.2 1178.5,398.7 1179.5,402.4 1180.5,402.0 1181.5,398.8 1182.5,402.4 1183.5,398.2 1184.5,396.0 1185.5,394.5 1186.5,395.4 1187.5,393.5 1188.5,385.3 1189.5,396.0 1190.5,394.3 1191.5,391.8 1192.5,391.9 1193.5,392.8 1194.5,388.2 1195.5,391.6 1196.5,396.4 1197.5,397.2 1198.5,392.1 1199.5,394.6 1200.5,395.4 1201.5,399.9 1202.5,399.6 1203.5,402.2 1204.5,399.1 1205.5,394.1 1206.5,397.3 1207.5,397.2 1208.5,388.3 1209.5,388.8 1210.5,398.8 1211.5,393.9 1212.5,386.5 1213.5,389.5 1214.5,385.1 1215.5,391.0 1216.5,388.2 1217.5,390.7 1218.5,388.9 1219.5,390.2 1220.5,386.5 1221.5,382.8 1222.5,387.3 1223.5,382.7 1224.5,377.7 1225.5,382.9 1226.5,385.2 1227.5,384.2 1228.5,385.2 1229.5,378.8 1230.5,387.0 1231.5,383.2 1232.5,391.6 1233.5,388.0 1234.5,388.2 1235.5,387.9 1236.5,386.8 1237.5,384.0 1238.5,379.5 1239.5,378.8 1240.5,381.3 1241.5,377.3 1242.5,381.2 1243.5,384.1 1244.5,382.7 1245.5,381.0 1246.5,386.5 1247.5,384.3 1248.5,380.3 1249.5,380.3 1250.5,385.0 1251.5,386.2 1252.5,389.7 1253.5,383.8 1254.5,383.7 1255.5,386.9 1256.5,390.3 1257.5,384.2 1258.5,389.2 1259.5,387.3 1260.5,385.7 1261.5,388.4 1262.5,388.7 1263.5,388.3 1264.5,390.5" fill="none" stroke="#ffffa6" stroke-width="1" stroke-linejoin="round" shape-rendering="crispEdges"/></svg><div class="yl" style="left:8px;top:162px">0.0</div><div class="yl" style="left:8px;top:188px">-10.0</div><div class="yl" style="left:8px;top:215px">-20.0</div><div class="yl" style="left:8px;top:242px">-30.0</div><div class="yl" style="left:8px;top:268px">-40.0</div><div class="yl" style="left:8px;top:295px">-50.0</div><div class="yl" style="left:8px;top:322px">-60.0</div><div class="yl" style="left:8px;top:349px">-70.0</div><div class="yl" style="left:8px;top:375px">-80.0</div><div class="yl" style="left:8px;top:402px">-90.0</div><div class="yl" style="left:8px;top:429px">-100.0</div><div class="yl" style="left:8px;top:456px">-110.0</div><div class="yl" style="left:8px;top:482px">-120.0</div><div class="t" style="left:11px;top:333px;font-size:12px;letter-spacing:0.6px;transform:rotate(-90deg) translate(-50%,0);transform-origin:0 0;">dBV rms</div><div class="a" style="left:1273px;top:165px;width:24px;height:681px;background:#fff"></div><div class="a" style="left:1273px;top:165px;width:22px;height:679px;background:#a9a799"></div><div class="a" style="left:1275px;top:167px;width:20px;height:677px;background:#edeadd"></div><div class="a" style="left:1275px;top:166px;width:20px;height:322px;background:linear-gradient(90deg,#fffcc4,#fff48e 35%,#fff18a);border:2px solid #4a4620;border-top-width:1px;border-bottom-width:1px"></div><div class="yr" style="left:1301px;top:162px">0.0</div><div class="a" style="left:1295px;top:167px;width:4px;height:1px;background:#000"></div><div class="yr" style="left:1301px;top:188px">-10.0</div><div class="a" style="left:1295px;top:193px;width:4px;height:1px;background:#000"></div><div class="yr" style="left:1301px;top:215px">-20.0</div><div class="a" style="left:1295px;top:220px;width:4px;height:1px;background:#000"></div><div class="yr" style="left:1301px;top:242px">-30.0</div><div class="a" style="left:1295px;top:247px;width:4px;height:1px;background:#000"></div><div class="yr" style="left:1301px;top:268px">-40.0</div><div class="a" style="left:1295px;top:273px;width:4px;height:1px;background:#000"></div><div class="yr" style="left:1301px;top:295px">-50.0</div><div class="a" style="left:1295px;top:300px;width:4px;height:1px;background:#000"></div><div class="yr" style="left:1301px;top:322px">-60.0</div><div class="a" style="left:1295px;top:327px;width:4px;height:1px;background:#000"></div><div class="yr" style="left:1301px;top:349px">-70.0</div><div class="a" style="left:1295px;top:354px;width:4px;height:1px;background:#000"></div><div class="yr" style="left:1301px;top:375px">-80.0</div><div class="a" style="left:1295px;top:380px;width:4px;height:1px;background:#000"></div><div class="yr" style="left:1301px;top:402px">-90.0</div><div class="a" style="left:1295px;top:407px;width:4px;height:1px;background:#000"></div><div class="yr" style="left:1301px;top:429px">-100.0</div><div class="a" style="left:1295px;top:434px;width:4px;height:1px;background:#000"></div><div class="yr" style="left:1301px;top:456px">-110.0</div><div class="a" style="left:1295px;top:461px;width:4px;height:1px;background:#000"></div><div class="yr" style="left:1301px;top:482px">-120.0</div><div class="a" style="left:1295px;top:487px;width:4px;height:1px;background:#000"></div><div class="a" style="left:63px;top:167px;width:2px;height:1px;background:#000"></div><div class="a" style="left:63px;top:193px;width:2px;height:1px;background:#000"></div><div class="a" style="left:63px;top:220px;width:2px;height:1px;background:#000"></div><div class="a" style="left:63px;top:247px;width:2px;height:1px;background:#000"></div><div class="a" style="left:63px;top:273px;width:2px;height:1px;background:#000"></div><div class="a" style="left:63px;top:300px;width:2px;height:1px;background:#000"></div><div class="a" style="left:63px;top:327px;width:2px;height:1px;background:#000"></div><div class="a" style="left:63px;top:354px;width:2px;height:1px;background:#000"></div><div class="a" style="left:63px;top:380px;width:2px;height:1px;background:#000"></div><div class="a" style="left:63px;top:407px;width:2px;height:1px;background:#000"></div><div class="a" style="left:63px;top:434px;width:2px;height:1px;background:#000"></div><div class="a" style="left:63px;top:461px;width:2px;height:1px;background:#000"></div><div class="a" style="left:63px;top:487px;width:2px;height:1px;background:#000"></div><div class="t" style="left:1343px;top:184px;font-size:12px;transform:rotate(-90deg);transform-origin:0 0">Set</div><div class="t" style="left:1359px;top:183px;font-size:12px;transform:rotate(-90deg);transform-origin:0 0">On</div><div class="sb" style="left:1342px;top:188px;width:14px;height:14px">1</div><div class="ck" style="left:1359px;top:188px"></div><div class="ov" style="left:1375px;top:190px;color:#007c00">Overlay 1</div><div class="sb" style="left:1342px;top:204px;width:14px;height:14px">2</div><div class="ck" style="left:1359px;top:204px"></div><div class="ov" style="left:1375px;top:206px;color:#18a0a0">Overlay 2</div><div class="sb" style="left:1342px;top:220px;width:14px;height:14px">3</div><div class="ck" style="left:1359px;top:220px"></div><div class="ov" style="left:1375px;top:222px;color:#800080">Overlay 3</div><div class="sb" style="left:1342px;top:236px;width:14px;height:14px">4</div><div class="ck" style="left:1359px;top:236px"></div><div class="ov" style="left:1375px;top:238px;color:#e800e8">Overlay 4</div><div class="sb" style="left:1342px;top:252px;width:14px;height:14px">5</div><div class="ck" style="left:1359px;top:252px"></div><div class="ov" style="left:1375px;top:254px;color:#7a4a18">Overlay 5</div><div class="sb" style="left:1342px;top:268px;width:14px;height:14px">6</div><div class="ck" style="left:1359px;top:268px"></div><div class="ov" style="left:1375px;top:270px;color:#e88860">Overlay 6</div><div class="sb" style="left:1342px;top:284px;width:14px;height:14px">C</div><div class="ck" style="left:1359px;top:284px"></div><div class="ov" style="left:1375px;top:286px;color:#000;letter-spacing:0.35px">Composite</div><div class="sb" style="left:1339px;top:301px;width:63px;height:18px;font-size:12px;line-height:15px;letter-spacing:0.15px">Options...</div>
<div class="t" style="left:665px;top:491px;font-size:12px;transform:translateX(-50%)">RIGHT</div><div class="a" style="left:63px;top:505px;width:1204px;height:341px;background:#fff"></div><div class="a" style="left:63px;top:505px;width:1202px;height:339px;background:#9d9d9d"></div><svg class="a" style="left:65px;top:507px" width="1200" height="321" viewBox="65 167 1200 321"><rect x="65" y="167" width="1200" height="321" fill="#505050"/><path d="M65 193.5H1265M65 220.5H1265M65 247.5H1265M65 273.5H1265M65 300.5H1265M65 327.5H1265M65 354.5H1265M65 380.5H1265M65 407.5H1265M65 434.5H1265M65 461.5H1265M107.5 167V488M157.5 167V488M196.5 167V488M227.5 167V488M254.5 167V488M277.5 167V488M298.5 167V488M316.5 167V488M436.5 167V488M507.5 167V488M556.5 167V488M595.5 167V488M627.5 167V488M653.5 167V488M677.5 167V488M697.5 167V488M715.5 167V488M835.5 167V488M906.5 167V488M956.5 167V488M994.5 167V488M1026.5 167V488M1053.5 167V488M1076.5 167V488M1096.5 167V488M1114.5 167V488M1235.5 167V488" stroke="#808080" stroke-width="1" fill="none" shape-rendering="crispEdges"/><polyline points="64.6,398.3 70.4,385.4 75.6,386.9 80.8,394.2 86.0,410.8 90.6,434.2 99.6,429.6 103.8,393.8 108.3,392.5 112.1,415.0 116.2,418.1 120.4,418.1 124.6,398.3 128.3,390.4 131.9,400.4 136.0,420.2 139.2,422.3 142.3,402.5 145.4,399.8 149.6,400.4 152.7,411.2 159.0,400.8 163.1,412.9 168.3,446.2 171.9,422.3 176.7,421.2 181.5,394.6 185.0,406.7 188.5,425.8 193.3,396.2 195.4,392.1 198.1,406.7 203.3,387.9 208.3,407.7 210.4,395.2 214.2,399.4 217.3,425.0 221.5,398.3 226.7,388.5 229.8,394.6 232.9,419.2 237.1,387.9 240.2,383.3 244.8,420.2 248.5,390.0 252.7,388.3 256.9,397.3 259.4,427.5 261.0,360.8 262.5,353.5 264.2,359.8 266.2,394.2 268.3,423.3 271.5,402.5 276.7,397.3 278.8,407.7 281.2,402.5 285.6,450.0 288.1,408.8 291.2,392.5 294.8,454.2 296.0,404.6 297.5,411.9 300.0,393.1 302.7,467.1 303.8,408.8 305.8,389.0 311.5,434.8 313.1,394.6 315.2,396.2 316.2,391.0 318.5,437.9 321.5,397.3 323.5,414.0 328.1,385.4 330.4,425.4 332.5,395.2 335.4,424.4 336.5,407.7 338.1,426.5 341.7,402.5 344.6,430.6 348.1,390.0 350.6,420.2 353.8,386.2 357.5,431.7 359.0,396.2 360.2,384.1 361.2,383.8 362.2,396.9 363.2,397.0 364.2,395.7 365.1,391.6 366.1,394.6 367.5,396.0 368.9,393.5 369.9,392.6 370.8,391.7 371.7,391.1 372.7,392.9 373.6,405.5 374.5,411.6 375.4,399.8 376.3,387.1 377.2,391.1 378.1,405.3 379.5,394.8 380.8,411.3 381.7,396.1 382.5,408.6 383.4,408.6 384.3,394.0 385.5,397.0 386.8,431.3 387.7,427.3 388.5,406.1 389.4,409.2 390.2,390.7 391.5,387.5 392.7,381.1 393.5,388.6 394.3,403.7 395.5,391.4 396.7,408.9 397.5,403.8 398.3,416.7 399.5,384.3 400.7,380.7 401.5,383.8 402.3,403.2 403.5,396.5 404.6,392.0 405.4,386.4 406.5,390.9 407.6,411.0 408.4,420.8 409.5,395.0 410.6,399.0 411.4,411.7 412.5,391.6 413.6,389.5 414.3,396.5 415.5,396.9 416.5,396.6 417.5,412.3 418.6,410.2 419.3,411.8 420.5,400.0 421.4,404.5 422.5,389.9 423.5,395.7 424.5,404.2 425.5,417.4 426.5,391.2 427.6,403.0 428.5,386.0 429.6,395.3 430.5,399.6 431.5,390.2 432.5,410.0 433.5,398.4 434.5,390.1 435.4,396.6 436.5,409.8 437.5,422.8 438.6,414.4 439.5,415.4 440.5,406.3 441.5,402.9 442.5,392.9 443.6,384.8 444.5,394.6 445.4,406.2 446.5,391.6 447.5,393.4 448.4,400.2 449.5,399.9 450.5,404.7 451.5,397.5 452.6,401.7 453.5,390.8 454.5,387.9 455.4,412.5 456.5,414.1 457.5,395.9 458.5,408.1 459.5,414.7 460.5,419.6 461.5,399.3 462.5,398.7 463.5,401.8 464.5,411.0 465.5,421.9 466.5,403.2 467.5,403.0 468.5,390.7 469.5,389.6 470.5,406.2 471.5,413.4 472.5,387.4 473.5,394.7 474.5,402.8 475.5,404.2 476.5,400.3 477.5,397.5 478.5,412.8 479.5,399.2 480.5,396.8 481.5,402.0 482.5,402.6 483.5,394.5 484.5,393.5 485.5,403.8 486.5,411.2 487.5,405.9 488.5,396.8 489.5,395.5 490.5,392.3 491.5,392.4 492.5,396.5 493.5,393.1 494.5,386.4 495.5,397.5 496.5,397.4 497.5,393.2 498.5,393.1 499.5,399.3 500.5,401.4 501.5,389.2 502.5,396.1 503.5,397.8 504.5,389.3 505.5,395.4 506.5,421.4 507.5,400.9 508.5,409.9 509.5,393.8 510.5,403.1 511.5,398.1 512.5,398.4 513.5,398.0 514.5,400.0 515.5,405.8 516.5,390.3 517.5,397.1 518.5,400.0 519.5,400.6 520.5,387.2 521.5,397.2 522.5,392.5 523.5,386.8 524.5,387.8 525.5,387.1 526.5,400.7 527.5,388.0 528.5,386.5 529.5,397.8 530.5,396.3 531.5,392.6 532.5,391.0 533.5,400.8 534.5,397.1 535.5,397.4 536.5,406.2 537.5,401.4 538.5,398.5 539.5,394.3 540.5,395.8 541.5,403.5 542.5,395.9 543.5,422.9 544.5,379.4 545.5,377.9 546.5,383.7 547.5,391.5 548.5,399.2 549.5,386.3 550.5,380.5 551.5,379.9 552.5,385.0 553.5,382.0 554.5,403.8 555.5,395.7 556.5,398.8 557.5,396.7 558.5,392.2 559.5,379.2 560.5,379.9 561.5,400.7 562.5,390.3 563.5,399.7 564.5,400.2 565.5,402.3 566.5,384.7 567.5,380.6 568.5,405.3 569.5,394.8 570.5,388.8 571.5,393.4 572.5,393.4 573.5,390.5 574.5,382.0 575.5,386.0 576.5,390.1 577.5,383.6 578.5,388.0 579.5,398.9 580.5,390.9 581.5,376.8 582.5,377.7 583.5,380.6 584.5,389.2 585.5,381.8 586.5,398.2 587.5,397.5 588.5,390.5 589.5,390.8 590.5,379.3 591.5,393.1 592.5,392.5 593.5,381.6 594.5,395.0 595.5,394.7 596.5,377.9 597.5,369.4 598.5,392.8 599.5,370.7 600.5,381.5 601.5,397.9 602.5,385.5 603.5,395.1 604.5,394.7 605.5,377.1 606.5,367.0 607.5,370.1 608.5,382.8 609.5,377.3 610.5,388.7 611.5,376.5 612.5,371.5 613.5,381.1 614.5,378.8 615.5,370.0 616.5,381.8 617.5,381.8 618.5,363.3 619.5,386.6 620.5,378.6 621.5,381.2 622.5,385.5 623.5,388.4 624.5,373.7 625.5,368.6 626.5,353.7 627.5,353.9 628.5,375.7 629.5,372.8 630.5,370.1 631.5,371.3 632.5,379.0 633.5,362.1 634.5,365.9 635.5,371.6 636.5,363.1 637.5,360.2 638.5,375.1 639.5,364.0 640.5,347.2 641.5,364.2 642.5,371.8 643.5,378.3 644.5,359.1 645.5,362.3 646.5,361.5 647.5,366.4 648.5,365.7 649.5,362.4 650.5,364.3 651.5,359.9 652.5,385.5 653.5,379.4 654.5,363.9 655.5,357.1 656.5,352.3 657.5,360.8 658.5,350.3 659.5,351.3 660.5,354.9 661.5,362.5 662.5,340.3 663.5,354.2 664.5,337.8 665.5,334.7 666.5,358.9 667.5,355.9 668.5,356.8 669.5,341.5 670.5,343.8 671.5,341.7 672.5,344.3 673.5,346.0 674.5,353.3 675.5,349.9 676.5,343.3 677.5,341.5 678.5,364.7 679.5,349.6 680.5,339.6 681.5,328.6 682.5,354.3 683.5,343.1 684.5,347.0 685.5,346.8 686.5,356.9 687.5,362.0 688.5,339.2 689.5,330.6 690.5,332.3 691.5,333.0 692.5,338.3 693.5,338.4 694.5,350.0 695.5,333.8 696.5,345.4 697.5,359.1 698.5,333.9 699.5,351.3 700.5,349.0 701.5,336.6 702.5,334.2 703.5,334.8 704.5,333.5 705.2,327.0 705.8,312.0 706.5,328.0 707.5,331.7 708.5,328.7 709.5,324.6 710.5,326.6 711.5,320.1 712.5,321.8 712.9,317.0 713.6,293.0 714.3,313.0 715.0,308.0 716.0,291.0 716.9,278.0 717.7,253.0 718.5,209.0 719.4,166.0 720.6,190.0 721.0,232.0 721.7,274.0 722.7,301.0 723.8,308.0 724.6,311.0 725.3,297.0 726.1,313.0 726.5,305.3 727.5,326.4 728.5,325.1 729.5,326.3 730.5,323.5 731.5,326.3 732.5,334.9 733.5,333.2 734.5,337.5 735.5,346.1 736.5,338.5 737.5,333.3 738.5,339.9 739.5,335.7 740.5,330.0 741.5,343.3 742.5,351.7 743.5,351.0 744.5,338.4 745.5,343.8 746.5,334.7 747.5,338.2 748.5,344.4 749.5,350.2 750.5,340.5 751.5,351.3 752.5,333.2 753.5,342.7 754.5,344.8 755.5,346.6 756.5,343.2 757.5,343.2 758.5,348.7 759.5,347.0 760.5,356.4 761.5,348.5 762.5,360.0 763.5,356.6 764.5,361.8 765.5,337.2 766.5,360.8 767.5,351.9 768.5,349.2 769.5,353.9 770.5,363.9 771.5,363.2 772.5,364.0 773.5,368.7 774.5,356.8 775.5,362.1 776.5,356.3 777.5,364.7 778.5,368.0 779.5,358.6 780.5,365.3 781.5,367.0 782.5,367.6 783.5,373.7 784.5,371.9 785.5,373.4 786.5,376.1 787.5,367.2 788.5,371.2 789.5,379.5 790.5,373.7 791.5,374.6 792.5,382.5 793.5,383.9 794.5,383.5 795.5,385.1 796.5,373.7 797.5,383.1 798.5,385.6 799.5,382.8 800.5,377.4 801.5,385.0 802.5,374.3 803.5,396.7 804.5,384.4 805.5,388.7 806.5,389.1 807.5,389.7 808.5,388.9 809.5,396.3 810.5,384.5 811.5,403.0 812.5,394.7 813.5,399.1 814.5,395.0 815.5,403.0 816.5,397.7 817.5,401.5 818.5,399.4 819.5,411.3 820.5,387.7 821.5,404.9 822.5,391.0 823.5,390.9 824.5,413.4 825.5,387.5 826.5,393.1 827.5,392.7 828.5,396.0 829.5,393.2 830.5,389.0 831.5,377.2 832.5,381.5 833.5,381.4 834.5,386.4 835.5,389.7 836.5,394.9 837.5,392.0 838.5,369.5 839.5,329.4 839.6,324.3 840.5,363.0 841.5,388.9 842.5,398.8 843.5,401.2 844.5,404.3 845.5,400.6 846.5,408.1 847.5,403.0 848.5,416.7 849.5,418.2 850.5,416.6 851.5,408.7 852.5,407.6 853.5,415.5 854.5,413.5 855.5,417.3 856.5,403.6 857.5,412.7 858.5,414.6 859.5,420.7 860.5,422.3 861.5,412.6 862.5,400.4 863.5,411.1 864.5,411.0 865.5,413.7 866.5,410.3 867.5,417.3 868.5,408.9 869.5,412.0 870.5,417.8 871.5,410.8 872.5,414.3 873.5,407.5 874.5,411.5 875.5,415.0 876.5,421.4 877.5,409.2 878.5,411.4 879.5,410.7 880.5,404.4 881.5,416.5 882.5,411.5 883.5,409.8 884.5,417.3 885.5,414.2 886.5,399.9 887.5,408.9 888.5,403.2 889.5,404.3 890.5,406.2 891.5,403.5 892.5,393.7 893.5,408.5 894.5,397.9 895.5,400.3 896.5,397.5 897.5,389.9 898.5,393.9 899.5,387.3 900.5,394.6 901.5,385.6 902.5,395.9 903.5,390.9 904.5,389.6 905.5,385.0 906.5,375.0 907.5,357.6 908.5,330.8 909.5,292.5 910.4,246.4 910.5,252.1 911.5,301.1 912.5,337.0 913.5,361.8 914.5,377.5 915.5,384.6 916.5,390.1 917.5,391.0 918.5,389.9 919.5,390.0 920.5,396.0 921.5,400.6 922.5,385.5 923.5,390.7 924.5,414.1 925.5,400.4 926.5,395.9 927.5,411.8 928.5,412.4 929.5,415.4 930.5,412.5 931.5,400.0 932.5,418.9 933.5,410.8 934.5,421.9 935.5,418.3 936.5,420.7 937.5,408.1 938.5,413.3 939.5,420.2 940.5,408.0 941.5,410.6 942.5,412.8 943.5,409.8 944.5,415.9 945.5,423.3 946.5,413.1 947.5,408.2 948.5,413.5 949.5,418.0 950.5,421.1 951.5,403.5 952.5,410.0 953.5,406.7 954.5,414.2 955.5,419.7 956.5,419.9 957.5,416.1 958.5,410.0 959.5,390.8 959.9,379.0 960.5,395.8 961.5,408.1 962.5,414.3 963.5,413.9 964.5,421.5 965.5,417.6 966.5,409.4 967.5,411.2 968.5,423.6 969.5,411.6 970.5,420.3 971.5,413.1 972.5,424.2 973.5,417.7 974.5,420.9 975.5,423.1 976.5,424.9 977.5,416.7 978.5,414.5 979.5,415.1 980.5,420.0 981.5,407.9 982.5,412.9 983.5,419.8 984.5,426.0 985.5,422.9 986.5,418.1 987.5,412.5 988.5,419.7 989.5,413.5 990.5,418.1 991.5,419.4 992.5,421.4 993.5,413.1 994.5,403.9 995.5,412.1 996.5,399.1 997.5,367.4 998.5,314.8 998.6,308.3 999.5,358.6 1000.5,394.3 1001.5,410.9 1002.5,411.4 1003.5,400.9 1004.5,415.5 1005.5,410.1 1006.5,406.2 1007.5,411.2 1008.5,411.1 1009.5,418.9 1010.5,405.4 1011.5,416.9 1012.5,417.0 1013.5,411.4 1014.5,415.8 1015.5,420.1 1016.5,417.4 1017.5,414.3 1018.5,407.4 1019.5,419.1 1020.5,425.0 1021.5,414.3 1022.5,407.9 1023.5,412.1 1024.5,420.8 1025.5,420.0 1026.5,419.7 1027.5,420.7 1028.5,415.4 1029.5,411.3 1030.2,404.7 1030.5,408.0 1031.5,413.8 1032.5,414.9 1033.5,408.1 1034.5,415.8 1035.5,411.0 1036.5,416.0 1037.5,411.8 1038.5,417.9 1039.5,422.4 1040.5,411.5 1041.5,424.1 1042.5,416.5 1043.5,420.2 1044.5,414.0 1045.5,415.9 1046.5,413.0 1047.5,409.0 1048.5,422.8 1049.5,421.9 1050.5,422.6 1051.5,410.4 1052.5,414.9 1053.5,409.9 1054.5,413.0 1055.5,398.8 1056.5,367.9 1056.9,350.5 1057.5,375.5 1058.5,402.9 1059.5,412.6 1060.5,410.5 1061.5,416.7 1062.5,411.5 1063.5,410.9 1064.5,412.8 1065.5,418.4 1066.5,419.8 1067.5,408.0 1068.5,413.3 1069.5,417.4 1070.5,407.6 1071.5,415.3 1072.5,413.6 1073.5,409.7 1074.5,416.9 1075.5,415.6 1076.5,411.4 1077.5,416.5 1078.5,412.0 1079.5,399.6 1080.1,385.3 1080.5,395.4 1081.5,406.2 1082.5,415.5 1083.5,415.9 1084.5,413.5 1085.5,412.5 1086.5,415.8 1087.5,413.6 1088.5,415.7 1089.5,408.2 1090.5,412.0 1091.5,410.0 1092.5,406.4 1093.5,414.4 1094.5,403.1 1095.5,408.2 1096.5,410.0 1097.5,410.9 1098.5,408.5 1099.5,400.3 1100.5,370.8 1100.5,370.8 1101.5,400.3 1102.5,410.6 1103.5,410.6 1104.5,410.1 1105.5,410.1 1106.5,410.7 1107.5,410.5 1108.5,411.8 1109.5,410.6 1110.5,414.7 1111.5,407.7 1112.5,414.6 1113.5,411.1 1114.5,405.2 1115.5,407.9 1116.5,413.3 1117.5,404.8 1118.5,409.8 1119.5,404.6 1120.5,409.2 1121.5,411.8 1122.5,405.0 1123.5,411.3 1124.5,406.8 1125.5,408.0 1126.5,405.3 1127.5,410.7 1128.5,409.1 1129.5,411.4 1130.5,405.1 1131.5,410.0 1132.5,410.5 1133.5,406.9 1134.5,403.3 1135.3,393.6 1135.5,396.6 1136.5,406.1 1137.5,406.7 1138.5,409.7 1139.5,409.8 1140.5,414.2 1141.5,412.0 1142.5,409.0 1143.5,405.4 1144.5,407.2 1145.5,406.0 1146.5,399.4 1147.5,404.4 1148.5,410.1 1149.5,405.0 1150.5,405.2 1151.5,401.1 1152.5,402.3 1153.5,403.3 1154.5,404.3 1155.5,400.9 1156.5,404.1 1157.5,399.4 1158.5,398.4 1159.5,401.5 1160.5,397.1 1161.5,400.0 1162.5,397.9 1163.5,396.8 1164.5,395.4 1165.5,398.2 1166.5,397.2 1167.5,397.6 1168.5,394.7 1169.5,394.3 1170.5,398.0 1171.5,401.3 1172.5,399.8 1173.5,397.7 1174.5,401.3 1175.5,399.1 1176.5,392.4 1177.0,386.0 1177.5,392.4 1178.5,397.1 1179.5,401.1 1180.5,397.6 1181.5,397.4 1182.5,401.4 1183.5,396.7 1184.5,396.8 1185.5,397.3 1186.5,394.5 1187.5,390.5 1188.5,395.5 1189.5,392.6 1190.5,394.1 1191.5,393.8 1192.5,392.9 1193.5,391.5 1194.5,389.2 1195.5,391.4 1196.5,388.9 1197.5,396.0 1198.5,394.6 1199.5,393.4 1200.5,390.2 1201.5,390.7 1202.5,398.7 1203.5,393.1 1204.5,396.1 1205.5,397.3 1206.5,393.6 1207.5,391.3 1208.5,393.7 1209.5,393.0 1210.5,384.1 1211.5,387.6 1212.5,391.3 1213.5,385.9 1214.5,387.4 1215.5,389.2 1216.5,382.0 1217.5,386.1 1218.5,385.9 1219.5,380.7 1220.5,381.7 1221.5,382.3 1222.5,381.9 1223.5,377.6 1224.5,378.3 1225.5,372.9 1226.5,375.9 1227.5,376.7 1228.5,379.6 1229.5,374.7 1230.5,374.8 1231.5,378.0 1232.5,383.0 1233.5,379.5 1234.5,380.3 1235.5,382.8 1236.5,381.0 1237.5,375.4 1238.5,378.1 1239.5,382.3 1240.5,375.5 1241.5,375.6 1242.5,371.0 1243.5,375.4 1244.5,376.4 1245.5,371.3 1246.5,374.6 1247.5,373.3 1248.5,374.5 1249.5,379.1 1250.5,379.3 1251.5,381.0 1252.5,378.1 1253.5,382.0 1254.5,379.7 1255.5,378.7 1256.5,381.0 1257.5,385.6 1258.5,377.3 1259.5,382.3 1260.5,377.8 1261.5,379.2 1262.5,384.2 1263.5,384.6 1264.5,384.6" fill="none" stroke="#ffffa6" stroke-width="1" stroke-linejoin="round" shape-rendering="crispEdges"/></svg><svg class="a" style="left:65px;top:828px" width="1200" height="16"><rect width="1200" height="16" fill="url(#sc)"/></svg><div class="sb" style="left:65px;top:828px;width:16px;height:16px"><div class="a" style="left:4px;top:3px;border:4px solid transparent;border-right:5px solid #000;border-left:0"></div></div><div class="sb" style="left:1248px;top:828px;width:17px;height:16px"><div class="a" style="left:5px;top:3px;border:4px solid transparent;border-left:5px solid #000;border-right:0"></div></div><div class="sb" style="left:1231px;top:828px;width:17px;height:16px"></div><div class="yl" style="left:8px;top:502px">0.0</div><div class="yl" style="left:8px;top:528px">-10.0</div><div class="yl" style="left:8px;top:555px">-20.0</div><div class="yl" style="left:8px;top:582px">-30.0</div><div class="yl" style="left:8px;top:608px">-40.0</div><div class="yl" style="left:8px;top:635px">-50.0</div><div class="yl" style="left:8px;top:662px">-60.0</div><div class="yl" style="left:8px;top:689px">-70.0</div><div class="yl" style="left:8px;top:715px">-80.0</div><div class="yl" style="left:8px;top:742px">-90.0</div><div class="yl" style="left:8px;top:769px">-100.0</div><div class="yl" style="left:8px;top:796px">-110.0</div><div class="yl" style="left:8px;top:822px">-120.0</div><div class="t" style="left:11px;top:673px;font-size:12px;letter-spacing:0.6px;transform:rotate(-90deg) translate(-50%,0);transform-origin:0 0;">dBV rms</div><div class="a" style="left:1275px;top:506px;width:20px;height:322px;background:linear-gradient(90deg,#fffcc4,#fff48e 35%,#fff18a);border:2px solid #4a4620;border-top-width:1px;border-bottom-width:1px"></div><div class="yr" style="left:1301px;top:502px">0.0</div><div class="a" style="left:1295px;top:507px;width:4px;height:1px;background:#000"></div><div class="yr" style="left:1301px;top:528px">-10.0</div><div class="a" style="left:1295px;top:533px;width:4px;height:1px;background:#000"></div><div class="yr" style="left:1301px;top:555px">-20.0</div><div class="a" style="left:1295px;top:560px;width:4px;height:1px;background:#000"></div><div class="yr" style="left:1301px;top:582px">-30.0</div><div class="a" style="left:1295px;top:587px;width:4px;height:1px;background:#000"></div><div class="yr" style="left:1301px;top:608px">-40.0</div><div class="a" style="left:1295px;top:613px;width:4px;height:1px;background:#000"></div><div class="yr" style="left:1301px;top:635px">-50.0</div><div class="a" style="left:1295px;top:640px;width:4px;height:1px;background:#000"></div><div class="yr" style="left:1301px;top:662px">-60.0</div><div class="a" style="left:1295px;top:667px;width:4px;height:1px;background:#000"></div><div class="yr" style="left:1301px;top:689px">-70.0</div><div class="a" style="left:1295px;top:694px;width:4px;height:1px;background:#000"></div><div class="yr" style="left:1301px;top:715px">-80.0</div><div class="a" style="left:1295px;top:720px;width:4px;height:1px;background:#000"></div><div class="yr" style="left:1301px;top:742px">-90.0</div><div class="a" style="left:1295px;top:747px;width:4px;height:1px;background:#000"></div><div class="yr" style="left:1301px;top:769px">-100.0</div><div class="a" style="left:1295px;top:774px;width:4px;height:1px;background:#000"></div><div class="yr" style="left:1301px;top:796px">-110.0</div><div class="a" style="left:1295px;top:801px;width:4px;height:1px;background:#000"></div><div class="yr" style="left:1301px;top:822px">-120.0</div><div class="a" style="left:1295px;top:827px;width:4px;height:1px;background:#000"></div><div class="a" style="left:63px;top:507px;width:2px;height:1px;background:#000"></div><div class="a" style="left:63px;top:533px;width:2px;height:1px;background:#000"></div><div class="a" style="left:63px;top:560px;width:2px;height:1px;background:#000"></div><div class="a" style="left:63px;top:587px;width:2px;height:1px;background:#000"></div><div class="a" style="left:63px;top:613px;width:2px;height:1px;background:#000"></div><div class="a" style="left:63px;top:640px;width:2px;height:1px;background:#000"></div><div class="a" style="left:63px;top:667px;width:2px;height:1px;background:#000"></div><div class="a" style="left:63px;top:694px;width:2px;height:1px;background:#000"></div><div class="a" style="left:63px;top:720px;width:2px;height:1px;background:#000"></div><div class="a" style="left:63px;top:747px;width:2px;height:1px;background:#000"></div><div class="a" style="left:63px;top:774px;width:2px;height:1px;background:#000"></div><div class="a" style="left:63px;top:801px;width:2px;height:1px;background:#000"></div><div class="a" style="left:63px;top:827px;width:2px;height:1px;background:#000"></div><div class="t" style="left:1343px;top:524px;font-size:12px;transform:rotate(-90deg);transform-origin:0 0">Set</div><div class="t" style="left:1359px;top:523px;font-size:12px;transform:rotate(-90deg);transform-origin:0 0">On</div><div class="sb" style="left:1342px;top:528px;width:14px;height:14px">1</div><div class="ck" style="left:1359px;top:528px"></div><div class="ov" style="left:1375px;top:530px;color:#007c00">Overlay 1</div><div class="sb" style="left:1342px;top:544px;width:14px;height:14px">2</div><div class="ck" style="left:1359px;top:544px"></div><div class="ov" style="left:1375px;top:546px;color:#18a0a0">Overlay 2</div><div class="sb" style="left:1342px;top:560px;width:14px;height:14px">3</div><div class="ck" style="left:1359px;top:560px"></div><div class="ov" style="left:1375px;top:562px;color:#800080">Overlay 3</div><div class="sb" style="left:1342px;top:576px;width:14px;height:14px">4</div><div class="ck" style="left:1359px;top:576px"></div><div class="ov" style="left:1375px;top:578px;color:#e800e8">Overlay 4</div><div class="sb" style="left:1342px;top:592px;width:14px;height:14px">5</div><div class="ck" style="left:1359px;top:592px"></div><div class="ov" style="left:1375px;top:594px;color:#7a4a18">Overlay 5</div><div class="sb" style="left:1342px;top:608px;width:14px;height:14px">6</div><div class="ck" style="left:1359px;top:608px"></div><div class="ov" style="left:1375px;top:610px;color:#e88860">Overlay 6</div><div class="sb" style="left:1342px;top:624px;width:14px;height:14px">C</div><div class="ck" style="left:1359px;top:624px"></div><div class="ov" style="left:1375px;top:626px;color:#000;letter-spacing:0.35px">Composite</div><div class="sb" style="left:1339px;top:641px;width:63px;height:18px;font-size:12px;line-height:15px;letter-spacing:0.15px">Options...</div>
<div class="xl" style="left:107.5px;top:849px">30</div>
<div class="xl" style="left:157.5px;top:849px">40</div>
<div class="xl" style="left:196.5px;top:849px">50</div>
<div class="xl" style="left:227.5px;top:849px">60</div>
<div class="xl" style="left:277.5px;top:849px">80</div>
<div class="xl" style="left:316.5px;top:849px">100</div>
<div class="xl" style="left:436.5px;top:849px">200</div>
<div class="xl" style="left:507.5px;top:849px">300</div>
<div class="xl" style="left:556.5px;top:849px">400</div>
<div class="xl" style="left:595.5px;top:849px">500</div>
<div class="xl" style="left:627.5px;top:849px">600</div>
<div class="xl" style="left:677.5px;top:849px">800</div>
<div class="xl" style="left:715.5px;top:849px">1.0k</div>
<div class="xl" style="left:835.5px;top:849px">2.0k</div>
<div class="xl" style="left:906.5px;top:849px">3.0k</div>
<div class="xl" style="left:956.5px;top:849px">4.0k</div>
<div class="xl" style="left:994.5px;top:849px">5.0k</div>
<div class="xl" style="left:1026.5px;top:849px">6.0k</div>
<div class="xl" style="left:1076.5px;top:849px">8.0k</div>
<div class="xl" style="left:1114.5px;top:849px">10.0k</div>
<div class="xl" style="left:1235.5px;top:849px">20.0k</div>
<div class="a" style="left:107px;top:844px;width:1px;height:3px;background:#000"></div>
<div class="a" style="left:157px;top:844px;width:1px;height:3px;background:#000"></div>
<div class="a" style="left:196px;top:844px;width:1px;height:3px;background:#000"></div>
<div class="a" style="left:227px;top:844px;width:1px;height:3px;background:#000"></div>
<div class="a" style="left:254px;top:844px;width:1px;height:3px;background:#000"></div>
<div class="a" style="left:277px;top:844px;width:1px;height:3px;background:#000"></div>
<div class="a" style="left:298px;top:844px;width:1px;height:3px;background:#000"></div>
<div class="a" style="left:316px;top:844px;width:1px;height:3px;background:#000"></div>
<div class="a" style="left:436px;top:844px;width:1px;height:3px;background:#000"></div>
<div class="a" style="left:507px;top:844px;width:1px;height:3px;background:#000"></div>
<div class="a" style="left:556px;top:844px;width:1px;height:3px;background:#000"></div>
<div class="a" style="left:595px;top:844px;width:1px;height:3px;background:#000"></div>
<div class="a" style="left:627px;top:844px;width:1px;height:3px;background:#000"></div>
<div class="a" style="left:653px;top:844px;width:1px;height:3px;background:#000"></div>
<div class="a" style="left:677px;top:844px;width:1px;height:3px;background:#000"></div>
<div class="a" style="left:697px;top:844px;width:1px;height:3px;background:#000"></div>
<div class="a" style="left:715px;top:844px;width:1px;height:3px;background:#000"></div>
<div class="a" style="left:835px;top:844px;width:1px;height:3px;background:#000"></div>
<div class="a" style="left:906px;top:844px;width:1px;height:3px;background:#000"></div>
<div class="a" style="left:956px;top:844px;width:1px;height:3px;background:#000"></div>
<div class="a" style="left:994px;top:844px;width:1px;height:3px;background:#000"></div>
<div class="a" style="left:1026px;top:844px;width:1px;height:3px;background:#000"></div>
<div class="a" style="left:1053px;top:844px;width:1px;height:3px;background:#000"></div>
<div class="a" style="left:1076px;top:844px;width:1px;height:3px;background:#000"></div>
<div class="a" style="left:1096px;top:844px;width:1px;height:3px;background:#000"></div>
<div class="a" style="left:1114px;top:844px;width:1px;height:3px;background:#000"></div>
<div class="a" style="left:1235px;top:844px;width:1px;height:3px;background:#000"></div>
<div class="t" style="left:681px;top:860px;font-size:12px">Frequency (Hz)</div>
<div class="t" style="left:1275px;top:849px;font-size:12px">Pwr</div>
<div class="sp" style="left:8px;width:119px">Running...</div>
<div class="sp" style="left:128px;width:102px">Real Time</div>
<div class="sp" style="left:232px;width:71px">48000 Hz</div>
<div class="sp" style="left:304px;width:52px">24 Bit</div>
<div class="sp" style="left:357px;width:61px">Stereo</div>
<div class="sp" style="left:419px;width:103px">FFT 65536 pts</div>
<div class="sp" style="left:523px;width:74px">Blackman</div>
<div class="a" style="left:598px;top:878px;width:839px;height:17px;border:1px solid;border-color:#8d8a7c #fff #fff #8d8a7c"></div>
<div class="a" style="left:600px;top:880px;width:804px;height:6px;background:repeating-linear-gradient(90deg,rgba(0,0,0,0) 0,rgba(0,0,0,0) 3px,rgba(0,60,0,.28) 3px,rgba(0,60,0,.28) 4px),linear-gradient(90deg,#1fe01f 0,#22e022 25%,#55d820 45%,#9acc20 60%,#c8b820 75%,#e8a828 90%,#f0a030 100%)"></div>
<div class="a" style="left:600px;top:887px;width:804px;height:6px;background:repeating-linear-gradient(90deg,rgba(0,0,0,0) 0,rgba(0,0,0,0) 3px,rgba(0,60,0,.28) 3px,rgba(0,60,0,.28) 4px),linear-gradient(90deg,#1fe01f 0,#22e022 25%,#55d820 45%,#9acc20 60%,#c8b820 75%,#e8a828 90%,#f0a030 100%)"></div>
</body></html>
